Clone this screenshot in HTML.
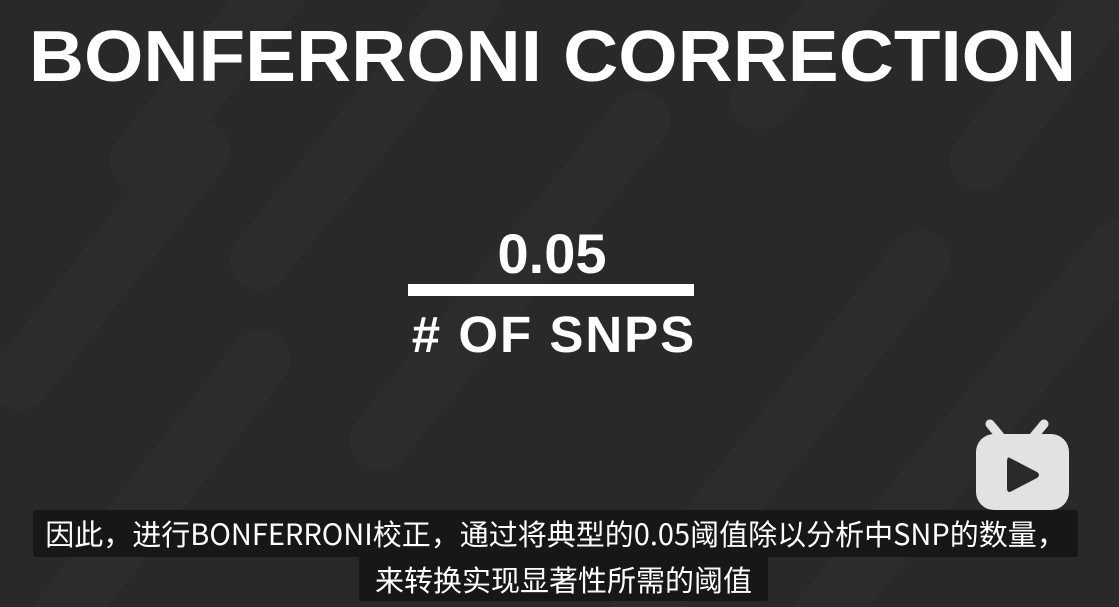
<!DOCTYPE html>
<html><head><meta charset="utf-8"><style>
html,body{margin:0;padding:0;overflow:hidden;width:1119px;height:607px}
body{background:#292929;position:relative;font-family:"Liberation Sans","Noto Sans CJK SC",sans-serif}
.bg{position:absolute;left:0;top:0}
.title{position:absolute;left:-7px;top:17px;width:1119px;text-align:center;color:#fff;font-size:72px;font-weight:bold;white-space:nowrap;transform:scaleX(1.06);line-height:80px}
.num{position:absolute;left:0;width:1104px;text-align:center;color:#fff;font-weight:bold;white-space:nowrap}
.bar{position:absolute;left:408px;top:284px;width:286px;height:12px;background:#fff}
.sub{position:absolute;background:rgba(20,20,20,0.85);color:#fff;font-family:"Noto Sans CJK SC",sans-serif;font-size:29px;line-height:46px;text-align:center;white-space:nowrap;border-radius:3px;overflow:hidden}
</style></head><body>
<svg class="bg" width="1119" height="607">
<g fill="none" stroke="#2c2c2c" stroke-width="60" stroke-linecap="round">
<path d="M140 160 L300 -40"/>
<path d="M260 260 L470 0"/>
<path d="M380 440 L640 120"/>
<path d="M620 640 L920 260"/>
<path d="M820 620 L1119 250"/>
<path d="M20 380 L200 150"/>
<path d="M60 620 L260 360"/>
<path d="M760 100 L880 -40"/>
<path d="M980 160 L1119 -20"/>
</g>
</svg>
<div class="title">BONFERRONI CORRECTION</div>
<div class="num" style="top:222px;font-size:56px;line-height:64px">0.05</div>
<div class="bar"></div>
<div class="num" style="top:306px;font-size:51px;line-height:58px;letter-spacing:2px;left:2px">#&nbsp;OF SNPS</div>
<svg style="position:absolute;left:970px;top:416px" width="104" height="100">
<g fill="#e2e2e2">
<path d="M30 20 L20 8" stroke="#e2e2e2" stroke-width="9" stroke-linecap="round"/>
<path d="M64 20 L74 8" stroke="#e2e2e2" stroke-width="9" stroke-linecap="round"/>
<rect x="6" y="18" width="93" height="76" rx="18"/>
</g>
<path d="M40 42 Q37 40 37 46 L37 72 Q37 78 42 75 L67 62 Q71 59 67 56 Z" fill="#2a2a2a"/>
</svg>
<div class="sub" style="left:33px;top:510px;width:1045px;height:47px">因此，进行BONFERRONI校正，通过将典型的0.05阈值除以分析中SNP的数量，</div>
<div class="sub" style="left:359px;top:556px;width:409px;height:45px">来转换实现显著性所需的阈值</div>
</body></html>
